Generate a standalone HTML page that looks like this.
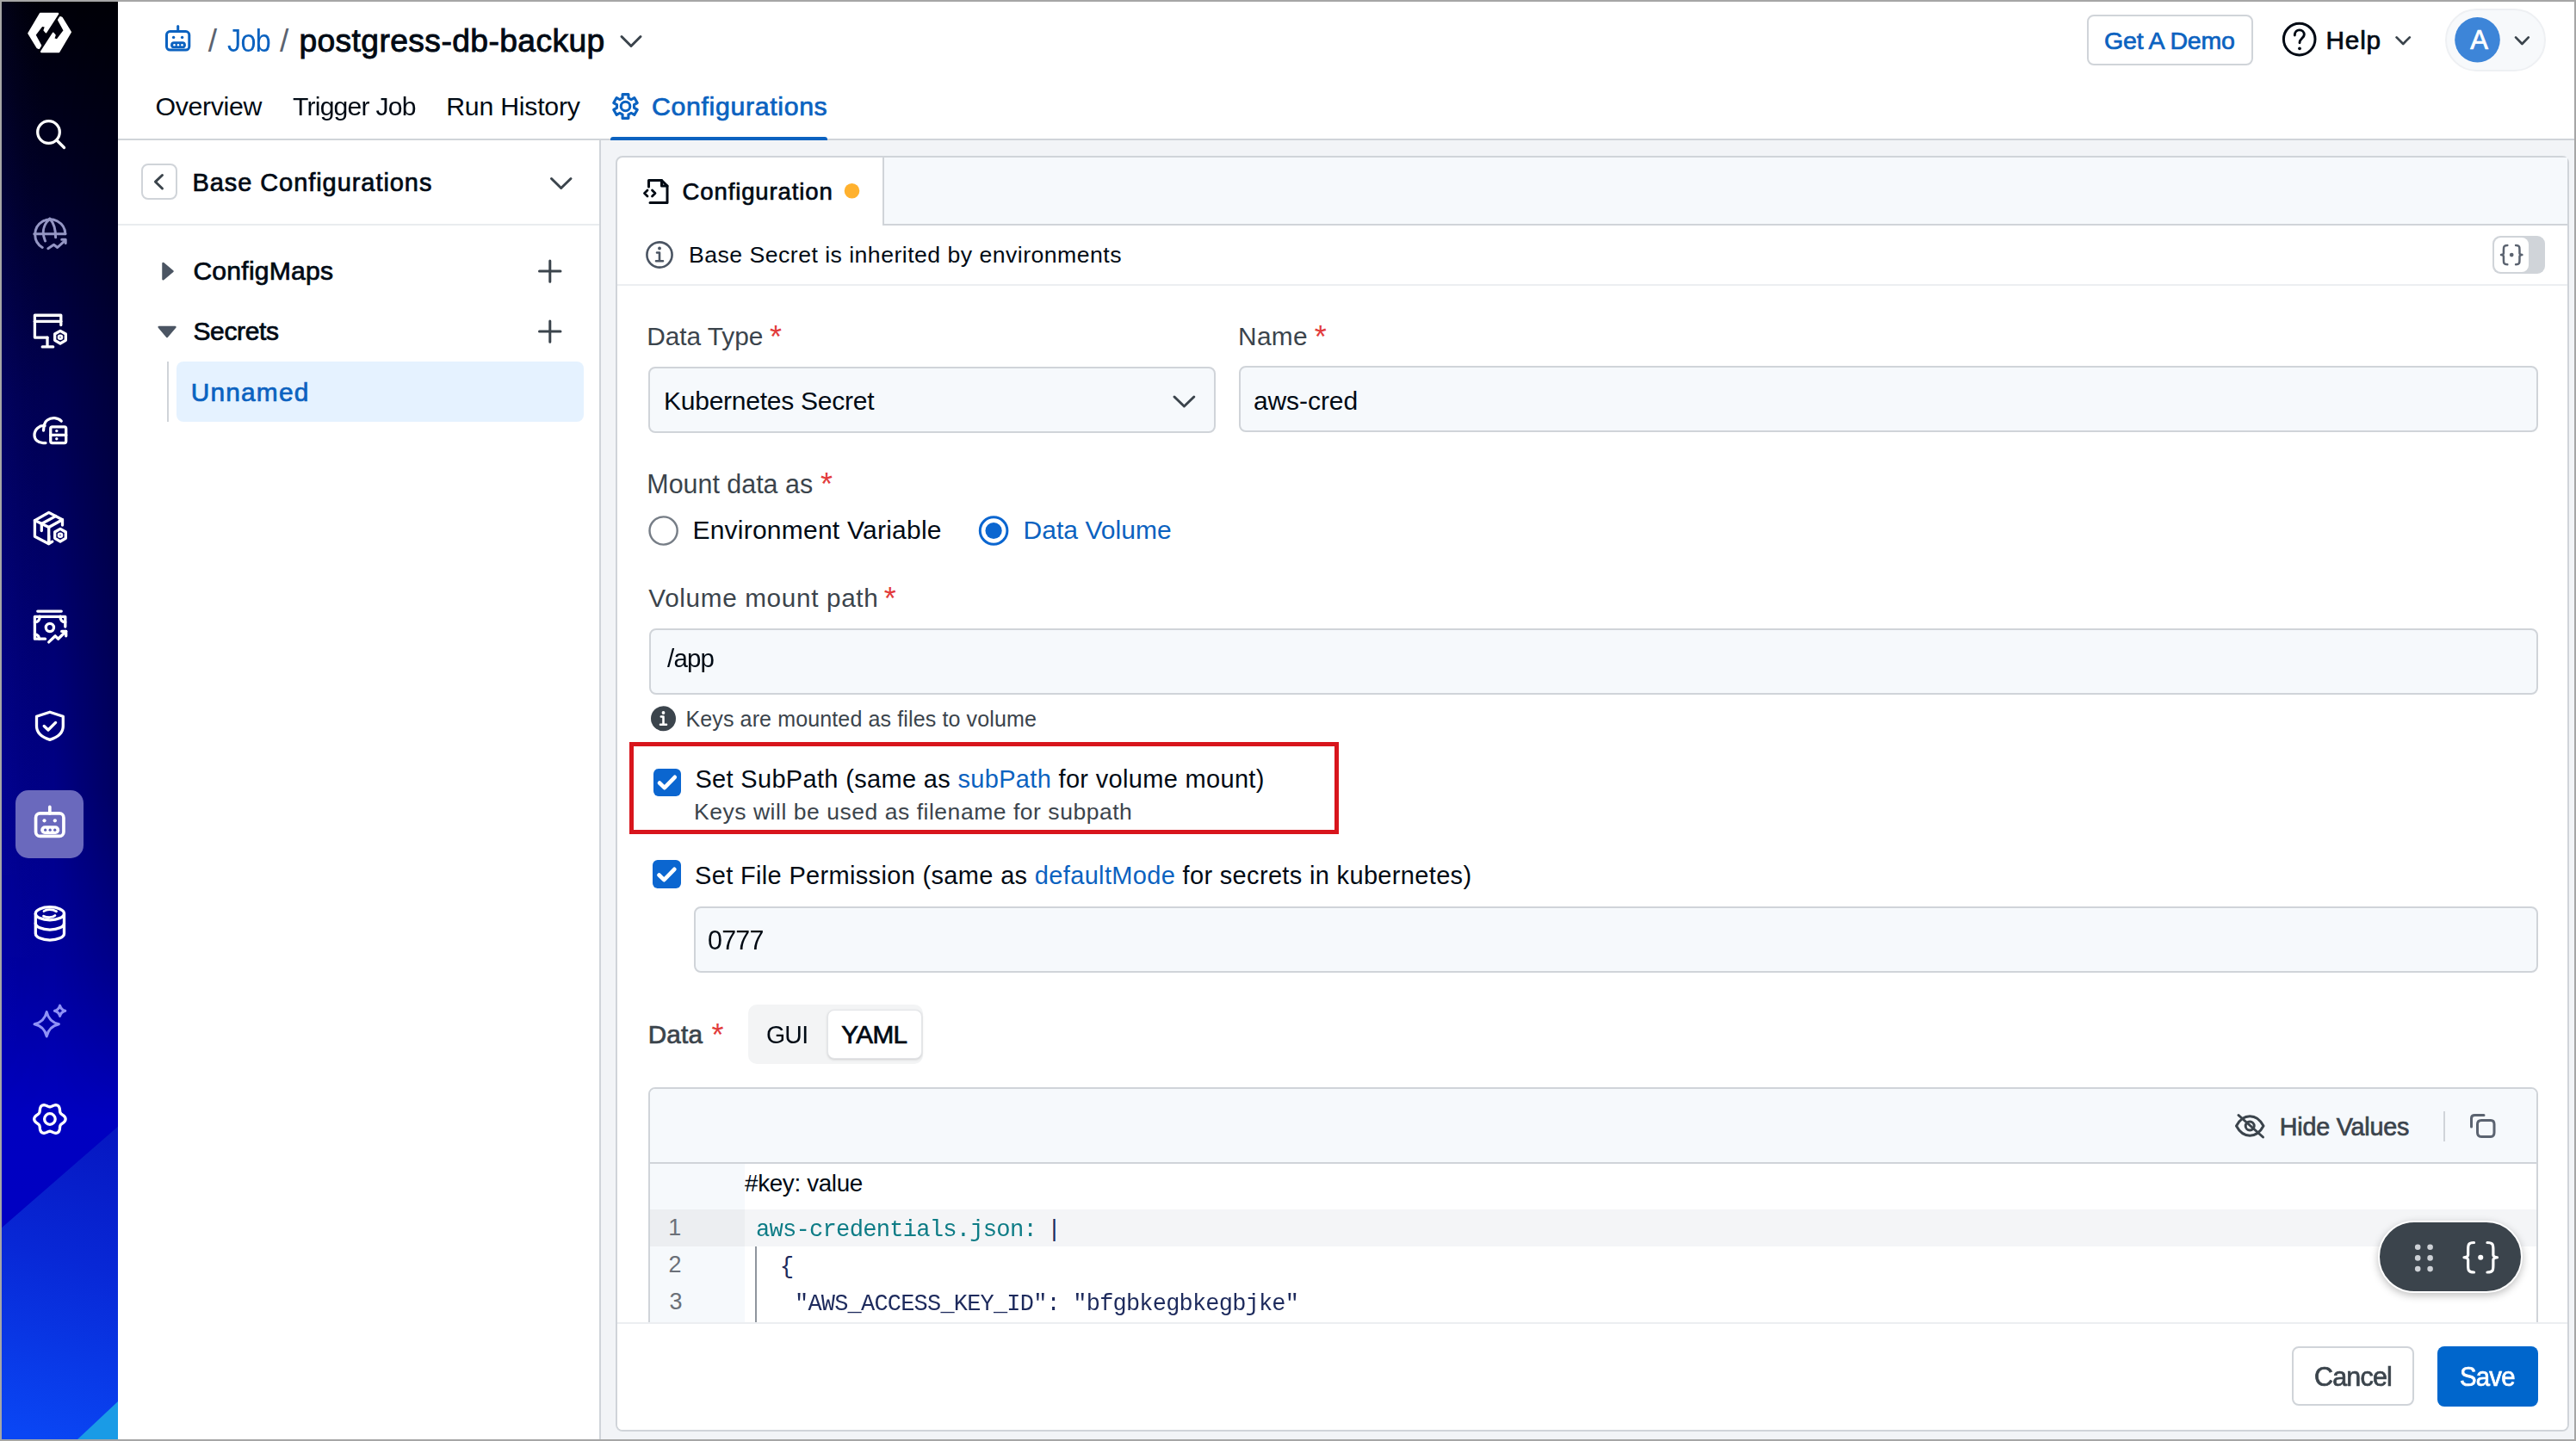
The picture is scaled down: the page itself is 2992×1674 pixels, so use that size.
<!DOCTYPE html>
<html><head><meta charset="utf-8">
<style>
html,body{margin:0;padding:0}
body{width:2992px;height:1674px;overflow:hidden;position:relative;background:#fff;font-family:"Liberation Sans",sans-serif}
.a{position:absolute;box-sizing:border-box}
.t{position:absolute;white-space:nowrap;line-height:1;z-index:6}
svg{position:absolute;overflow:visible}
</style></head><body>
<!-- sidebar -->
<div class="a" style="left:2px;top:2px;width:135px;height:1670px;overflow:hidden;background:#000080">
 <svg width="135" height="1670" style="left:0;top:0">
  <defs>
   <linearGradient id="sv" x1="0" y1="0" x2="0" y2="1">
    <stop offset="0" stop-color="#000008"/><stop offset="0.119" stop-color="#000024"/><stop offset="0.274" stop-color="#000052"/>
    <stop offset="0.472" stop-color="#000078"/><stop offset="0.67" stop-color="#00009e"/><stop offset="0.777" stop-color="#0000c0"/><stop offset="1" stop-color="#0000c8"/>
   </linearGradient>
   <linearGradient id="sh" x1="0" y1="0" x2="1" y2="0">
    <stop offset="0" stop-color="#1e1eff" stop-opacity="0.07"/><stop offset="0.45" stop-color="#000" stop-opacity="0"/><stop offset="1" stop-color="#000" stop-opacity="0.28"/>
   </linearGradient>
   <linearGradient id="sf" x1="0" y1="0" x2="0" y2="1">
    <stop offset="0" stop-color="#fff"/><stop offset="0.55" stop-color="#fff"/><stop offset="0.78" stop-color="#fff" stop-opacity="0"/>
   </linearGradient>
   <mask id="sm"><rect x="0" y="0" width="135" height="1670" fill="url(#sf)"/></mask>
   <linearGradient id="lb" gradientUnits="userSpaceOnUse" x1="137" y1="1303" x2="40" y2="1668">
    <stop offset="0" stop-color="#0616c0"/><stop offset="0.45" stop-color="#0828d6"/><stop offset="1" stop-color="#0a46f4"/>
   </linearGradient>
  </defs>
  <rect x="0" y="0" width="135" height="1670" fill="url(#sv)"/>
  <rect x="0" y="0" width="135" height="1670" fill="url(#sh)" mask="url(#sm)"/>
  <polygon points="-2,1426 137,1305 137,1672 -2,1672" fill="url(#lb)"/>
  <polygon points="86,1672 137,1624 137,1672" fill="#1a9be6"/>
 </svg>
</div>
<!-- header -->
<div class="a" style="left:137px;top:161px;width:2853px;height:2px;background:#d0d4d9"></div>
<!-- left panel -->
<div class="a" style="left:696px;top:163px;width:2px;height:1509px;background:#d0d4d9"></div>
<div class="a" style="left:137px;top:260px;width:559px;height:2px;background:#e9ecef"></div>
<div class="a" style="left:698px;top:163px;width:2292px;height:1509px;background:#f2f4f7"></div>
<!-- card -->
<div class="a" style="left:715px;top:181px;width:2269px;height:1482px;border:2px solid #d0d4d9;border-radius:8px;background:#fff;overflow:hidden">
</div>
<div class="a" style="left:137px;top:161px;width:2853px;height:2px;background:#d0d4d9"></div>
<div class="a" style="left:709px;top:159px;width:252px;height:4px;background:#0b62c0;border-radius:3px 3px 0 0"></div>
<div class="a" style="left:2423.5px;top:16.6px;width:193.5px;height:59.9px;border:2px solid #d0d4d9;border-radius:8px"></div>
<div class="a" style="left:2840.4px;top:9.5px;width:116.6px;height:73.5px;background:#f7f9fb;border:2px solid #eef0f3;border-radius:37px"></div>
<div class="a" style="left:163.6px;top:189.6px;width:42.9px;height:42.9px;border:2px solid #d0d4d9;border-radius:8px"></div>
<div class="a" style="left:193.8px;top:420px;width:2.2px;height:69.8px;background:#d0d4d9"></div>
<div class="a" style="left:205px;top:420px;width:473px;height:69.8px;background:#e5f2ff;border-radius:8px"></div>
<div class="a" style="left:1025px;top:183px;width:2px;height:77px;background:#d0d4d9"></div>
<div class="a" style="left:1027px;top:183px;width:1955px;height:77px;background:#f6f9fc"></div>
<div class="a" style="left:1025px;top:260px;width:1957px;height:2px;background:#d0d4d9"></div>
<div class="a" style="left:717px;top:330px;width:2265px;height:2px;background:#eceef1"></div>
<div class="a" style="left:2895.3px;top:274px;width:60.3px;height:43.5px;background:#d0d4d9;border-radius:9px"></div>
<div class="a" style="left:2897.3px;top:276px;width:40px;height:39.5px;background:#fff;border-radius:8px"></div>
<div class="a" style="left:753.3px;top:425.5px;width:659.1px;height:77.5px;background:#f6f9fc;border:2px solid #d0d4d9;border-radius:8px"></div>
<div class="a" style="left:1439px;top:425.3px;width:1509.2px;height:77.2px;background:#f6f9fc;border:2px solid #d0d4d9;border-radius:8px"></div>
<div class="a" style="left:753.5px;top:730px;width:2194.5px;height:77px;background:#f6f9fc;border:2px solid #d0d4d9;border-radius:8px"></div>
<div class="a" style="left:805.6px;top:1052.7px;width:2142.4px;height:77.5px;background:#f6f9fc;border:2px solid #d0d4d9;border-radius:8px"></div>
<div class="a" style="left:730.5px;top:862.4px;width:824.8px;height:106.4px;border:5px solid #d8151c"></div>
<div class="a" style="left:758.9px;top:892.5px;width:32.4px;height:32.5px;background:#0b66d0;border-radius:6px"></div>
<div class="a" style="left:758.4px;top:999.4px;width:33.1px;height:33.1px;background:#0b66d0;border-radius:6px"></div>
<div class="a" style="left:868.6px;top:1166.5px;width:203.4px;height:69.9px;background:#f3f4f5;border-radius:10px"></div>
<div class="a" style="left:961.4px;top:1173px;width:109.8px;height:57.3px;background:#fff;border:1px solid #e4e6e9;border-radius:8px;box-shadow:0 1px 3px rgba(0,0,0,0.16)"></div>
<div class="a" style="left:753.3px;top:1263.3px;width:2194.7px;height:400px;border:2px solid #d0d4d9;border-radius:8px;background:#fff"></div>
<div class="a" style="left:755.3px;top:1265.3px;width:2190.7px;height:85px;background:#f6f9fc;border-radius:6px 6px 0 0"></div>
<div class="a" style="left:755.3px;top:1350px;width:2190.7px;height:2px;background:#d0d4d9"></div>
<div class="a" style="left:755.3px;top:1352px;width:110px;height:190px;background:#f6f9fc"></div>
<div class="a" style="left:865.3px;top:1405.4px;width:2080.7px;height:42.6px;background:#f4f5f7"></div>
<div class="a" style="left:755.3px;top:1405.4px;width:110px;height:42.6px;background:#eceef1"></div>
<div class="a" style="left:877px;top:1448px;width:2px;height:88px;background:#8f959d"></div>
<div class="a" style="left:2838px;top:1291px;width:2px;height:35px;background:#d0d4d9"></div>
<div class="a" style="left:717px;top:1536px;width:2265px;height:125px;background:#fff;border-top:2px solid #eceef1;border-radius:0 0 6px 6px"></div>
<div class="a" style="left:2661.5px;top:1564.3px;width:142.8px;height:68.9px;border:2px solid #d0d4d9;border-radius:8px;background:#fff"></div>
<div class="a" style="left:2831.3px;top:1564.3px;width:116.6px;height:69.7px;background:#0066cc;border-radius:8px"></div>
<div class="a" style="left:2761.6px;top:1418.3px;width:168.4px;height:84.2px;background:#3b444c;border:2px solid #fff;border-radius:44px;box-shadow:0 3px 10px rgba(0,0,0,0.25)"></div>
<div class="a" style="left:18.2px;top:917.7px;width:78.8px;height:79.3px;background:#6a69bd;border-radius:15px"></div>
<svg width="2992" height="1674" style="left:0;top:0;z-index:5">
<polygon points="46.75,15.97 67.20,15.97 53.47,37.23 51.55,35.02 53.09,30.90 48.96,29.36 40.42,40.59 47.09,52.88 45.22,55.86 43.39,55.18 33.31,38.77" fill="#fff" stroke="#fff" stroke-width="2.2" stroke-linejoin="round"/>
<polygon points="68.45,60.03 48.00,60.03 61.73,38.77 63.65,40.98 62.11,45.10 66.24,46.64 74.78,35.41 68.11,23.12 69.98,20.14 71.81,20.82 81.89,37.23" fill="#fff" stroke="#fff" stroke-width="2.2" stroke-linejoin="round"/>
<circle cx="56.5" cy="153.5" r="12.8" fill="none" stroke="#fff" stroke-width="3.3"/>
<path d="M66,163 L74.5,171.5" fill="none" stroke="#ffffff" stroke-width="3.3" stroke-linecap="round" stroke-linejoin="round" />
<path d="M49.2,287.5 A17.6,17.6 0 1 1 75.9,271.7" fill="none" stroke="#9496c4" stroke-width="3" stroke-linecap="round" stroke-linejoin="round" />
<path d="M39.8,271.7 L75.9,271.7" fill="none" stroke="#9496c4" stroke-width="3" stroke-linecap="round" stroke-linejoin="round" />
<path d="M57.9,254.2 C49,262 49,272 52.5,280" fill="none" stroke="#9496c4" stroke-width="3" stroke-linecap="round" stroke-linejoin="round" />
<path d="M57.9,254.2 C63.5,260 64.6,268 64.6,275.8" fill="none" stroke="#9496c4" stroke-width="3" stroke-linecap="round" stroke-linejoin="round" />
<path d="M55.8,288.75 L62.5,284.2 L66.7,287.5 L75.4,279.6" fill="none" stroke="#9496c4" stroke-width="3" stroke-linecap="round" stroke-linejoin="round" />
<path d="M71.7,278.3 L76.2,278.3 L76.2,282.5" fill="none" stroke="#9496c4" stroke-width="3" stroke-linecap="round" stroke-linejoin="round" />
<path d="M70.8,377.5 L70.8,366.25 L40.4,366.25 L40.4,392.1 L55,392.1" fill="none" stroke="#ffffff" stroke-width="3.3" stroke-linecap="round" stroke-linejoin="round" />
<path d="M40.4,373.3 L70.8,373.3" fill="none" stroke="#ffffff" stroke-width="3.3" stroke-linecap="round" stroke-linejoin="round" />
<path d="M55,392.1 L55,402.9 M49.2,402.9 L61.7,402.9" fill="none" stroke="#ffffff" stroke-width="3.3" stroke-linecap="round" stroke-linejoin="round" />
<path d="M70.00,399.00 L63.68,395.35 L63.68,388.05 L70.00,384.40 L76.32,388.05 L76.32,395.35 Z" fill="none" stroke="#ffffff" stroke-width="3.3" stroke-linecap="round" stroke-linejoin="round" />
<circle cx="70" cy="391.7" r="2" fill="none" stroke="#fff" stroke-width="2.6"/>
<path d="M71.25,489.2 C67,485 60,484.5 55,488 C52,490 50.8,494 50.5,500" fill="none" stroke="#ffffff" stroke-width="3.3" stroke-linecap="round" stroke-linejoin="round" />
<path d="M52,494.5 C46,494 40,498.5 40,505.5 C40,511 44.5,514.6 50,514.6 L53,514.6" fill="none" stroke="#ffffff" stroke-width="3.3" stroke-linecap="round" stroke-linejoin="round" />
<rect x="58.75" y="495.8" width="17.95" height="18.8" rx="2" fill="none" stroke="#fff" stroke-width="3.3"/>
<path d="M58.75,505.4 L76.7,505.4" fill="none" stroke="#ffffff" stroke-width="3.3" stroke-linecap="round" stroke-linejoin="round" />
<circle cx="65.8" cy="500.6" r="1.7" fill="#fff"/><circle cx="65.8" cy="509.8" r="1.7" fill="#fff"/>
<path d="M56.7,622.5 L56.7,631.7 L40.4,623.3 L40.4,604.6 L56.7,595.4 L72.5,603.75 L72.5,610" fill="none" stroke="#ffffff" stroke-width="3.3" stroke-linecap="round" stroke-linejoin="round" />
<path d="M40.4,604.6 L56.7,612.5 L72.5,603.75" fill="none" stroke="#ffffff" stroke-width="3.3" stroke-linecap="round" stroke-linejoin="round" />
<path d="M56.7,612.5 L56.7,631.7 L60.8,629.2" fill="none" stroke="#ffffff" stroke-width="3.3" stroke-linecap="round" stroke-linejoin="round" />
<path d="M48.3,608.5 L64.6,599.6" fill="none" stroke="#ffffff" stroke-width="3.3" stroke-linecap="round" stroke-linejoin="round" />
<path d="M48.3,608.5 L48.3,616.5" fill="none" stroke="#ffffff" stroke-width="3.3" stroke-linecap="round" stroke-linejoin="round" />
<path d="M70.00,629.00 L63.68,625.35 L63.68,618.05 L70.00,614.40 L76.32,618.05 L76.32,625.35 Z" fill="none" stroke="#ffffff" stroke-width="3.3" stroke-linecap="round" stroke-linejoin="round" />
<circle cx="70" cy="621.7" r="2" fill="none" stroke="#fff" stroke-width="2.6"/>
<path d="M43.75,710.1 L71.25,710.1" fill="none" stroke="#ffffff" stroke-width="3.3" stroke-linecap="round" stroke-linejoin="round" />
<path d="M52.5,742.2 L40.4,742.2 L40.4,716.3 L75.8,716.3 L75.8,728" fill="none" stroke="#ffffff" stroke-width="3.3" stroke-linecap="round" stroke-linejoin="round" />
<path d="M40.4,722.6 A5,5 0 0 0 45.8,716.3 M75.8,722.6 A5,5 0 0 1 70.4,716.3 M40.4,737 A5.2,5.2 0 0 1 45.6,742.2" fill="none" stroke="#ffffff" stroke-width="3.3" stroke-linecap="round" stroke-linejoin="round" />
<circle cx="57.9" cy="729" r="4.6" fill="none" stroke="#fff" stroke-width="3.3"/>
<path d="M56.7,745.9 L64.2,738.8 L67.5,742.2 L76.7,733.4" fill="none" stroke="#ffffff" stroke-width="3.3" stroke-linecap="round" stroke-linejoin="round" />
<path d="M71.7,733.4 L76.7,733.4 L76.7,738.8" fill="none" stroke="#ffffff" stroke-width="3.3" stroke-linecap="round" stroke-linejoin="round" />
<path d="M57.9,827.2 L73.3,832.3 L73.3,843.5 C73.3,851.5 66.5,856.6 57.9,859.4 C49.3,856.6 42.5,851.5 42.5,843.5 L42.5,832.3 Z" fill="none" stroke="#ffffff" stroke-width="3.3" stroke-linecap="round" stroke-linejoin="round" />
<path d="M51.2,843.5 L56,848 L64.6,839.4" fill="none" stroke="#ffffff" stroke-width="3.3" stroke-linecap="round" stroke-linejoin="round" />
<rect x="41.548" y="944.9544000000001" width="32.4016" height="26.488" rx="4.928" fill="none" stroke="#fff" stroke-width="3.6959999999999997"/><line x1="57.81039999999999" y1="937.4392" x2="57.81039999999999" y2="944.9544000000001" stroke="#fff" stroke-width="3.6959999999999997" stroke-linecap="round"/><circle cx="51.52719999999999" cy="953.332" r="2.0944" fill="#fff"/><circle cx="63.8472" cy="953.332" r="2.0944" fill="#fff"/><rect x="47.215199999999996" y="959.3688000000001" width="21.9296" height="9.6096" rx="4.8048" fill="#fff"/><circle cx="52.636" cy="964.1736000000001" r="1.6016000000000001" fill="#5d5db5"/><circle cx="58.18000000000001" cy="964.1736000000001" r="1.6016000000000001" fill="#5d5db5"/><circle cx="63.724000000000004" cy="964.1736000000001" r="1.6016000000000001" fill="#5d5db5"/>
<ellipse cx="57.9" cy="1061.25" rx="16.6" ry="7.6" fill="none" stroke="#fff" stroke-width="3.3"/>
<path d="M41.3,1061.25 L41.3,1084.5 A16.6,7.6 0 0 0 74.5,1084.5 L74.5,1061.25" fill="none" stroke="#ffffff" stroke-width="3.3" stroke-linecap="round" stroke-linejoin="round" />
<path d="M41.3,1072.5 A16.6,7.6 0 0 0 74.5,1072.5" fill="none" stroke="#ffffff" stroke-width="3.3" stroke-linecap="round" stroke-linejoin="round" />
<path d="M51,1058.5 C54,1056 61,1056 65.5,1058.8" fill="none" stroke="#ffffff" stroke-width="2.8" stroke-linecap="round" stroke-linejoin="round" />
<path d="M50.5,1064.2 C54,1066 61,1066.5 64,1063.6" fill="none" stroke="#ffffff" stroke-width="2.8" stroke-linecap="round" stroke-linejoin="round" />
<path d="M54.2,1175.55 Q56.756,1187.194 68.4,1189.75 Q56.756,1192.306 54.2,1203.95 Q51.644000000000005,1192.306 40.0,1189.75 Q51.644000000000005,1187.194 54.2,1175.55 Z" fill="none" stroke="#8f92f6" stroke-width="3" stroke-linecap="round" stroke-linejoin="round" />
<path d="M69.6,1168.1 Q70.83999999999999,1173.06 75.8,1174.3 Q70.83999999999999,1175.54 69.6,1180.5 Q68.36,1175.54 63.39999999999999,1174.3 Q68.36,1173.06 69.6,1168.1 Z" fill="none" stroke="#8f92f6" stroke-width="3" stroke-linecap="round" stroke-linejoin="round" />
<path d="M76.10,1300.00 L76.05,1300.63 L75.88,1301.26 L75.62,1301.86 L75.27,1302.44 L74.84,1302.99 L74.35,1303.50 L73.82,1303.97 L73.27,1304.41 L72.72,1304.82 L72.18,1305.20 L71.68,1305.57 L71.22,1305.93 L70.82,1306.30 L70.48,1306.69 L70.20,1307.10 L69.98,1307.55 L69.82,1308.04 L69.70,1308.57 L69.61,1309.15 L69.54,1309.77 L69.48,1310.43 L69.40,1311.11 L69.30,1311.80 L69.15,1312.50 L68.96,1313.18 L68.70,1313.82 L68.37,1314.42 L67.98,1314.95 L67.52,1315.40 L67.00,1315.76 L66.42,1316.03 L65.80,1316.20 L65.15,1316.28 L64.47,1316.26 L63.78,1316.16 L63.10,1315.99 L62.42,1315.77 L61.77,1315.52 L61.14,1315.24 L60.54,1314.97 L59.97,1314.72 L59.42,1314.50 L58.90,1314.34 L58.40,1314.24 L57.90,1314.20 L57.40,1314.24 L56.90,1314.34 L56.38,1314.50 L55.83,1314.72 L55.26,1314.97 L54.66,1315.24 L54.03,1315.52 L53.38,1315.77 L52.70,1315.99 L52.02,1316.16 L51.33,1316.26 L50.65,1316.28 L50.00,1316.20 L49.38,1316.03 L48.80,1315.76 L48.28,1315.40 L47.82,1314.95 L47.43,1314.42 L47.10,1313.82 L46.84,1313.18 L46.65,1312.50 L46.50,1311.80 L46.40,1311.11 L46.32,1310.43 L46.26,1309.77 L46.19,1309.15 L46.10,1308.57 L45.98,1308.04 L45.82,1307.55 L45.60,1307.10 L45.32,1306.69 L44.98,1306.30 L44.58,1305.93 L44.12,1305.57 L43.62,1305.20 L43.08,1304.82 L42.53,1304.41 L41.98,1303.97 L41.45,1303.50 L40.96,1302.99 L40.53,1302.44 L40.18,1301.86 L39.92,1301.26 L39.75,1300.63 L39.70,1300.00 L39.75,1299.37 L39.92,1298.74 L40.18,1298.14 L40.53,1297.56 L40.96,1297.01 L41.45,1296.50 L41.98,1296.03 L42.53,1295.59 L43.08,1295.18 L43.62,1294.80 L44.12,1294.43 L44.58,1294.07 L44.98,1293.70 L45.32,1293.31 L45.60,1292.90 L45.82,1292.45 L45.98,1291.96 L46.10,1291.43 L46.19,1290.85 L46.26,1290.23 L46.32,1289.57 L46.40,1288.89 L46.50,1288.20 L46.65,1287.50 L46.84,1286.82 L47.10,1286.18 L47.43,1285.58 L47.82,1285.05 L48.28,1284.60 L48.80,1284.24 L49.38,1283.97 L50.00,1283.80 L50.65,1283.72 L51.33,1283.74 L52.02,1283.84 L52.70,1284.01 L53.38,1284.23 L54.03,1284.48 L54.66,1284.76 L55.26,1285.03 L55.83,1285.28 L56.38,1285.50 L56.90,1285.66 L57.40,1285.76 L57.90,1285.80 L58.40,1285.76 L58.90,1285.66 L59.42,1285.50 L59.97,1285.28 L60.54,1285.03 L61.14,1284.76 L61.77,1284.48 L62.42,1284.23 L63.10,1284.01 L63.78,1283.84 L64.47,1283.74 L65.15,1283.72 L65.80,1283.80 L66.42,1283.97 L67.00,1284.24 L67.52,1284.60 L67.98,1285.05 L68.37,1285.58 L68.70,1286.18 L68.96,1286.82 L69.15,1287.50 L69.30,1288.20 L69.40,1288.89 L69.48,1289.57 L69.54,1290.23 L69.61,1290.85 L69.70,1291.43 L69.82,1291.96 L69.98,1292.45 L70.20,1292.90 L70.48,1293.31 L70.82,1293.70 L71.22,1294.07 L71.68,1294.43 L72.18,1294.80 L72.72,1295.18 L73.27,1295.59 L73.82,1296.03 L74.35,1296.50 L74.84,1297.01 L75.27,1297.56 L75.62,1298.14 L75.88,1298.74 L76.05,1299.37 Z" fill="none" stroke="#ffffff" stroke-width="3.3" stroke-linecap="round" stroke-linejoin="round" />
<circle cx="57.9" cy="1300" r="6.3" fill="none" stroke="#fff" stroke-width="3.3"/>
<rect x="193.5" y="36.6" width="26.3" height="21.5" rx="4.0" fill="none" stroke="#0b62c0" stroke-width="3.0"/><line x1="206.7" y1="30.5" x2="206.7" y2="36.6" stroke="#0b62c0" stroke-width="3.0" stroke-linecap="round"/><circle cx="201.6" cy="43.4" r="1.7" fill="#0b62c0"/><circle cx="211.6" cy="43.4" r="1.7" fill="#0b62c0"/><rect x="198.1" y="48.3" width="17.8" height="7.8" rx="3.9" fill="#0b62c0"/><circle cx="202.5" cy="52.2" r="1.3" fill="#fff"/><circle cx="207.0" cy="52.2" r="1.3" fill="#fff"/><circle cx="211.5" cy="52.2" r="1.3" fill="#fff"/>
<path d="M722,42.5 L733,53.5 L744,42.5" fill="none" stroke="#3b444c" stroke-width="3" stroke-linecap="round" stroke-linejoin="round" />
<path d="M723.09,113.89 L723.05,109.62 L729.95,109.62 L729.91,113.89 L733.12,115.74 L736.80,113.58 L740.24,119.55 L736.53,121.65 L736.53,125.35 L740.24,127.45 L736.80,133.42 L733.12,131.26 L729.91,133.11 L729.95,137.38 L723.05,137.38 L723.09,133.11 L719.88,131.26 L716.20,133.42 L712.76,127.45 L716.47,125.35 L716.47,121.65 L712.76,119.55 L716.20,113.58 L719.88,115.74 Z" fill="none" stroke="#0b62c0" stroke-width="3.1" stroke-linecap="round" stroke-linejoin="round" />
<circle cx="726.5" cy="123.5" r="5.3" fill="none" stroke="#0b62c0" stroke-width="3.1"/>
<circle cx="2670.7" cy="45.6" r="18.3" fill="none" stroke="#000a14" stroke-width="3"/>
<path d="M2665.3,41 C2665.3,37 2667.8,34.9 2670.8,34.9 C2674,34.9 2676.3,37.2 2676.3,40.2 C2676.3,44 2671,44.8 2671,49.8" fill="none" stroke="#000a14" stroke-width="2.9" stroke-linecap="round" stroke-linejoin="round" />
<circle cx="2671" cy="56.3" r="1.9" fill="#000a14"/>
<path d="M2783.6,43.4 L2791.2,51 L2798.8,43.4" fill="none" stroke="#3b444c" stroke-width="2.7" stroke-linecap="round" stroke-linejoin="round" />
<circle cx="2877.5" cy="46.25" r="26.3" fill="#3d85d8"/>
<path d="M2922,43.4 L2929.4,51 L2936.8,43.4" fill="none" stroke="#3b444c" stroke-width="2.7" stroke-linecap="round" stroke-linejoin="round" />
<path d="M188.5,203.5 L180.5,211.2 L188.5,219" fill="none" stroke="#3b444c" stroke-width="3" stroke-linecap="round" stroke-linejoin="round" />
<path d="M640.5,207.5 L651.7,218.5 L663,207.5" fill="none" stroke="#3b444c" stroke-width="3" stroke-linecap="round" stroke-linejoin="round" />
<polygon points="189.5,306 200.5,315.1 189.5,324.3" fill="#4b5563" stroke="#4b5563" stroke-width="2.5" stroke-linejoin="round"/>
<polygon points="184.7,380 203.4,380 194,391" fill="#4b5563" stroke="#4b5563" stroke-width="2.5" stroke-linejoin="round"/>
<path d="M626.5,315.1 L651,315.1 M638.8,303 L638.8,327.2" fill="none" stroke="#3b444c" stroke-width="3" stroke-linecap="round" stroke-linejoin="round" />
<path d="M626.5,385.1 L651,385.1 M638.8,373 L638.8,397.2" fill="none" stroke="#3b444c" stroke-width="3" stroke-linecap="round" stroke-linejoin="round" />
<path d="M753.5,217 L753.5,209.5 L768.5,209.5 L775,216 L775,235.5 L755,235.5" fill="none" stroke="#000a14" stroke-width="3" stroke-linecap="round" stroke-linejoin="round" />
<path d="M768.5,209.5 L768.5,216 L775,216" fill="none" stroke="#000a14" stroke-width="3" stroke-linecap="round" stroke-linejoin="round" />
<path d="M752,221 L748.5,224.5 L752,228 M757.5,221 L761,224.5 L757.5,228" fill="none" stroke="#000a14" stroke-width="2.8" stroke-linecap="round" stroke-linejoin="round" />
<circle cx="989.5" cy="221.8" r="8.8" fill="#ffb12e"/>
<circle cx="766" cy="296" r="14.6" fill="none" stroke="#4b5563" stroke-width="2.6"/>
<circle cx="766" cy="288.5" r="1.9" fill="#4b5563"/>
<path d="M763,293.5 L766,293.5 L766,303 M762,303.3 L770,303.3" fill="none" stroke="#4b5563" stroke-width="2.6" stroke-linecap="round" stroke-linejoin="round" />
<path d="M2912.32,285 C2907.928,285 2907.928,286.776 2907.928,290.55 L2907.928,294.324 C2907.928,295.656 2905,296.1 2905,296.1 C2905,296.1 2907.928,296.54400000000004 2907.928,297.87600000000003 L2907.928,301.65 C2907.928,305.424 2907.928,307.2 2912.32,307.2" fill="none" stroke="#5b6370" stroke-width="2.5" stroke-linecap="round" stroke-linejoin="round"/><path d="M2922.08,285 C2926.472,285 2926.472,286.776 2926.472,290.55 L2926.472,294.324 C2926.472,295.656 2929.4,296.1 2929.4,296.1 C2929.4,296.1 2926.472,296.54400000000004 2926.472,297.87600000000003 L2926.472,301.65 C2926.472,305.424 2926.472,307.2 2922.08,307.2" fill="none" stroke="#5b6370" stroke-width="2.5" stroke-linecap="round" stroke-linejoin="round"/><circle cx="2917.2" cy="296.1" r="2.375" fill="#5b6370"/>
<path d="M1364,461 L1375.4,472 L1386.8,461" fill="none" stroke="#3b444c" stroke-width="3" stroke-linecap="round" stroke-linejoin="round" />
<circle cx="770.6" cy="616.5" r="16.1" fill="#fff" stroke="#767d86" stroke-width="2.4"/>
<circle cx="1154.1" cy="616.5" r="15.8" fill="#fff" stroke="#0b66d0" stroke-width="3"/>
<circle cx="1154.1" cy="616.5" r="9.6" fill="#0b66d0"/>
<circle cx="770.5" cy="834.8" r="14.5" fill="#3b444c"/>
<circle cx="770.5" cy="828" r="1.9" fill="#fff"/>
<path d="M767.8,832.5 L770.5,832.5 L770.5,841.5 M767,841.8 L774,841.8" fill="none" stroke="#fff" stroke-width="2.6" stroke-linecap="round" stroke-linejoin="round" />
<path d="M766,909.5 L771.8,915.2 L783.8,902.8" fill="none" stroke="#fff" stroke-width="4.6" stroke-linecap="round" stroke-linejoin="round" />
<path d="M765.5,1016.5 L771.3,1022.2 L783.3,1009.8" fill="none" stroke="#fff" stroke-width="4.6" stroke-linecap="round" stroke-linejoin="round" />
<path d="M2597.5,1308 C2601.5,1300.5 2607.5,1296.8 2613.2,1296.8 C2619,1296.8 2625,1300.5 2629,1308 C2625,1315.5 2619,1319.2 2613.2,1319.2 C2607.5,1319.2 2601.5,1315.5 2597.5,1308 Z" fill="none" stroke="#3b444c" stroke-width="3" stroke-linecap="round" stroke-linejoin="round" />
<circle cx="2613.2" cy="1308" r="5" fill="none" stroke="#3b444c" stroke-width="3"/>
<path d="M2600,1295.5 L2628.5,1321" fill="none" stroke="#3b444c" stroke-width="3" stroke-linecap="round" stroke-linejoin="round" />
<path d="M2877.5,1306 L2877.5,1315.5 C2877.5,1318.5 2879,1320.5 2882,1320.5 L2893,1320.5 C2896,1320.5 2897,1318.5 2897,1315.5 L2897,1306 C2897,1303 2896,1301.5 2893,1301.5 L2882,1301.5 C2879,1301.5 2877.5,1303 2877.5,1306 Z" fill="none" stroke="#5b6370" stroke-width="3" stroke-linecap="round" stroke-linejoin="round" />
<path d="M2870.5,1309 L2870.5,1299 C2870.5,1296.5 2872,1295.5 2874.5,1295.5 L2885,1295.5" fill="none" stroke="#5b6370" stroke-width="3" stroke-linecap="round" stroke-linejoin="round" />
<circle cx="2808.2" cy="1448.7" r="3.3" fill="#cdd1d6"/>
<circle cx="2808.2" cy="1461.4" r="3.3" fill="#cdd1d6"/>
<circle cx="2808.2" cy="1474.1" r="3.3" fill="#cdd1d6"/>
<circle cx="2822.6" cy="1448.7" r="3.3" fill="#cdd1d6"/>
<circle cx="2822.6" cy="1461.4" r="3.3" fill="#cdd1d6"/>
<circle cx="2822.6" cy="1474.1" r="3.3" fill="#cdd1d6"/>
<path d="M2873.55,1443.5 C2866.62,1443.5 2866.62,1446.26 2866.62,1452.125 L2866.62,1457.99 C2866.62,1460.06 2862,1460.75 2862,1460.75 C2862,1460.75 2866.62,1461.44 2866.62,1463.51 L2866.62,1469.375 C2866.62,1475.24 2866.62,1478.0 2873.55,1478.0" fill="none" stroke="#fff" stroke-width="3.2" stroke-linecap="round" stroke-linejoin="round"/><path d="M2888.95,1443.5 C2895.88,1443.5 2895.88,1446.26 2895.88,1452.125 L2895.88,1457.99 C2895.88,1460.06 2900.5,1460.75 2900.5,1460.75 C2900.5,1460.75 2895.88,1461.44 2895.88,1463.51 L2895.88,1469.375 C2895.88,1475.24 2895.88,1478.0 2888.95,1478.0" fill="none" stroke="#fff" stroke-width="3.2" stroke-linecap="round" stroke-linejoin="round"/><circle cx="2881.25" cy="1460.75" r="3.04" fill="#fff"/>
</svg>
<div class="t" style="left:241.70px;top:28.54px;font-size:37.25px;letter-spacing:0.000px;color:#5b6370;font-weight:400;font-family:'Liberation Sans'">/</div>
<div class="t" style="left:263.80px;top:28.54px;font-size:37.25px;letter-spacing:-0.800px;color:#0b62c0;font-weight:400;font-family:'Liberation Sans';transform:scaleX(0.8669);transform-origin:0 0">Job</div>
<div class="t" style="left:325.00px;top:28.54px;font-size:37.25px;letter-spacing:0.000px;color:#5b6370;font-weight:400;font-family:'Liberation Sans'">/</div>
<div class="t" style="left:347.40px;top:28.54px;font-size:37.25px;letter-spacing:0.389px;color:#000a14;font-weight:400;font-family:'Liberation Sans';-webkit-text-stroke:0.89px #000a14">postgress-db-backup</div>
<div class="t" style="left:180.60px;top:108.55px;font-size:30.29px;letter-spacing:-0.357px;color:#000a14;font-weight:400;font-family:'Liberation Sans'">Overview</div>
<div class="t" style="left:340.00px;top:108.55px;font-size:30.29px;letter-spacing:-0.800px;color:#000a14;font-weight:400;font-family:'Liberation Sans';transform:scaleX(0.9958);transform-origin:0 0">Trigger Job</div>
<div class="t" style="left:518.20px;top:108.55px;font-size:30.29px;letter-spacing:-0.250px;color:#000a14;font-weight:400;font-family:'Liberation Sans'">Run History</div>
<div class="t" style="left:757.00px;top:108.55px;font-size:30.29px;letter-spacing:0.654px;color:#0b62c0;font-weight:400;font-family:'Liberation Sans';-webkit-text-stroke:0.73px #0b62c0">Configurations</div>
<div class="t" style="left:2444.00px;top:32.73px;font-size:28.55px;letter-spacing:-0.222px;color:#0b62c0;font-weight:400;font-family:'Liberation Sans';-webkit-text-stroke:0.69px #0b62c0">Get A Demo</div>
<div class="t" style="left:2701.50px;top:31.85px;font-size:29.71px;letter-spacing:0.833px;color:#000a14;font-weight:400;font-family:'Liberation Sans';-webkit-text-stroke:0.71px #000a14">Help</div>
<div class="t" style="left:2869.20px;top:31.14px;font-size:31.01px;letter-spacing:0.000px;color:#ffffff;font-weight:400;font-family:'Liberation Sans';-webkit-text-stroke:0.74px #ffffff">A</div>
<div class="t" style="left:223.40px;top:197.76px;font-size:28.99px;letter-spacing:0.944px;color:#000a14;font-weight:400;font-family:'Liberation Sans';-webkit-text-stroke:0.70px #000a14">Base Configurations</div>
<div class="t" style="left:224.40px;top:300.18px;font-size:30.14px;letter-spacing:0.222px;color:#000a14;font-weight:400;font-family:'Liberation Sans';-webkit-text-stroke:0.72px #000a14">ConfigMaps</div>
<div class="t" style="left:224.40px;top:369.70px;font-size:30.0px;letter-spacing:-0.333px;color:#000a14;font-weight:400;font-family:'Liberation Sans';-webkit-text-stroke:0.72px #000a14">Secrets</div>
<div class="t" style="left:221.80px;top:440.62px;font-size:29.86px;letter-spacing:1.167px;color:#0b62c0;font-weight:400;font-family:'Liberation Sans';-webkit-text-stroke:0.72px #0b62c0">Unnamed</div>
<div class="t" style="left:792.50px;top:208.89px;font-size:27.54px;letter-spacing:0.875px;color:#000a14;font-weight:400;font-family:'Liberation Sans';-webkit-text-stroke:0.66px #000a14">Configuration</div>
<div class="t" style="left:800.00px;top:283.33px;font-size:26.67px;letter-spacing:0.462px;color:#000a14;font-weight:400;font-family:'Liberation Sans'">Base Secret is inherited by environments</div>
<div class="t" style="left:751.30px;top:375.62px;font-size:29.86px;letter-spacing:-0.062px;color:#3b444c;font-weight:400;font-family:'Liberation Sans'">Data Type</div>
<div class="t" style="left:1438.00px;top:375.62px;font-size:29.86px;letter-spacing:0.333px;color:#3b444c;font-weight:400;font-family:'Liberation Sans'">Name</div>
<div class="t" style="left:771.00px;top:450.70px;font-size:30.0px;letter-spacing:-0.250px;color:#000a14;font-weight:400;font-family:'Liberation Sans'">Kubernetes Secret</div>
<div class="t" style="left:1455.90px;top:450.70px;font-size:30.0px;letter-spacing:-0.071px;color:#000a14;font-weight:400;font-family:'Liberation Sans'">aws-cred</div>
<div class="t" style="left:751.30px;top:546.83px;font-size:30.43px;letter-spacing:0.000px;color:#3b444c;font-weight:400;font-family:'Liberation Sans'">Mount data as</div>
<div class="t" style="left:804.40px;top:601.20px;font-size:30.0px;letter-spacing:0.237px;color:#000a14;font-weight:400;font-family:'Liberation Sans'">Environment Variable</div>
<div class="t" style="left:1188.50px;top:601.20px;font-size:30.0px;letter-spacing:0.050px;color:#0b62c0;font-weight:400;font-family:'Liberation Sans'">Data Volume</div>
<div class="t" style="left:753.30px;top:680.25px;font-size:29.71px;letter-spacing:0.656px;color:#3b444c;font-weight:400;font-family:'Liberation Sans'">Volume mount path</div>
<div class="t" style="left:774.70px;top:750.45px;font-size:29.71px;letter-spacing:-0.800px;color:#000a14;font-weight:400;font-family:'Liberation Sans';transform:scaleX(0.9930);transform-origin:0 0">/app</div>
<div class="t" style="left:796.40px;top:822.89px;font-size:25.07px;letter-spacing:0.103px;color:#3b444c;font-weight:400;font-family:'Liberation Sans'">Keys are mounted as files to volume</div>
<div class="t" style="left:807.40px;top:891.46px;font-size:28.99px;letter-spacing:0.333px;color:#000a14;font-weight:400;font-family:'Liberation Sans'">Set SubPath (same as <span style="color:#0b62c0">subPath</span> for volume mount)</div>
<div class="t" style="left:806.00px;top:930.06px;font-size:26.52px;letter-spacing:0.525px;color:#3b444c;font-weight:400;font-family:'Liberation Sans'">Keys will be used as filename for subpath</div>
<div class="t" style="left:807.00px;top:1003.06px;font-size:28.99px;letter-spacing:0.341px;color:#000a14;font-weight:400;font-family:'Liberation Sans'">Set File Permission (same as <span style="color:#0b62c0">defaultMode</span> for secrets in kubernetes)</div>
<div class="t" style="left:822.00px;top:1077.24px;font-size:31.01px;letter-spacing:-0.800px;color:#000a14;font-weight:400;font-family:'Liberation Sans';transform:scaleX(0.9814);transform-origin:0 0">0777</div>
<div class="t" style="left:752.70px;top:1186.95px;font-size:29.71px;letter-spacing:0.167px;color:#3b444c;font-weight:400;font-family:'Liberation Sans';-webkit-text-stroke:0.71px #3b444c">Data</div>
<div class="t" style="left:890.00px;top:1186.95px;font-size:29.71px;letter-spacing:-0.800px;color:#000a14;font-weight:400;font-family:'Liberation Sans';transform:scaleX(0.9583);transform-origin:0 0">GUI</div>
<div class="t" style="left:977.30px;top:1186.95px;font-size:29.71px;letter-spacing:-0.667px;color:#000a14;font-weight:400;font-family:'Liberation Sans';-webkit-text-stroke:0.71px #000a14">YAML</div>
<div class="t" style="left:2647.80px;top:1295.31px;font-size:28.7px;letter-spacing:-0.200px;color:#3b444c;font-weight:400;font-family:'Liberation Sans';-webkit-text-stroke:0.69px #3b444c">Hide Values</div>
<div class="t" style="left:865.00px;top:1361.24px;font-size:27.83px;letter-spacing:-0.350px;color:#000a14;font-weight:400;font-family:'Liberation Sans'">#key: value</div>
<div class="t" style="left:776.20px;top:1413.18px;font-size:26.96px;letter-spacing:0.000px;color:#6b7078;font-weight:400;font-family:'Liberation Sans'">1</div>
<div class="t" style="left:776.60px;top:1456.18px;font-size:26.96px;letter-spacing:0.000px;color:#6b7078;font-weight:400;font-family:'Liberation Sans'">2</div>
<div class="t" style="left:777.40px;top:1499.28px;font-size:26.96px;letter-spacing:0.000px;color:#6b7078;font-weight:400;font-family:'Liberation Sans'">3</div>
<div class="t" style="left:877.50px;top:1415.08px;font-size:27.4px;letter-spacing:-0.800px;color:#0e7c86;font-weight:400;font-family:'Liberation Mono';transform:scaleX(0.9925);transform-origin:0 0">aws-credentials.json:</div>
<div class="t" style="left:1216.30px;top:1415.08px;font-size:27.4px;letter-spacing:0.000px;color:#1d2a5c;font-weight:400;font-family:'Liberation Mono'">|</div>
<div class="t" style="left:905.70px;top:1458.08px;font-size:27.4px;letter-spacing:0.000px;color:#1d2a5c;font-weight:400;font-family:'Liberation Mono'">{</div>
<div class="t" style="left:923.20px;top:1500.78px;font-size:27.4px;letter-spacing:-0.800px;color:#1d2a5c;font-weight:400;font-family:'Liberation Mono';transform:scaleX(0.9847);transform-origin:0 0">"AWS_ACCESS_KEY_ID": "bfgbkegbkegbjke"</div>
<div class="t" style="left:2687.50px;top:1584.14px;font-size:31.01px;letter-spacing:-0.800px;color:#3b444c;font-weight:400;font-family:'Liberation Sans';-webkit-text-stroke:0.74px #3b444c;transform:scaleX(0.9823);transform-origin:0 0">Cancel</div>
<div class="t" style="left:2856.70px;top:1584.14px;font-size:31.01px;letter-spacing:-0.800px;color:#ffffff;font-weight:400;font-family:'Liberation Sans';-webkit-text-stroke:0.74px #ffffff;transform:scaleX(0.9463);transform-origin:0 0">Save</div>
<div class="t" style="left:894.00px;top:373.74px;font-size:36px;letter-spacing:0.000px;color:#e23b3b;font-weight:400;font-family:'Liberation Sans'">*</div>
<div class="t" style="left:1526.70px;top:373.74px;font-size:36px;letter-spacing:0.000px;color:#e23b3b;font-weight:400;font-family:'Liberation Sans'">*</div>
<div class="t" style="left:953.00px;top:544.74px;font-size:36px;letter-spacing:0.000px;color:#e23b3b;font-weight:400;font-family:'Liberation Sans'">*</div>
<div class="t" style="left:1026.80px;top:678.44px;font-size:36px;letter-spacing:0.000px;color:#e23b3b;font-weight:400;font-family:'Liberation Sans'">*</div>
<div class="t" style="left:826.40px;top:1185.24px;font-size:36px;letter-spacing:0.000px;color:#e23b3b;font-weight:400;font-family:'Liberation Sans'">*</div>
<!-- outer frame -->
<div class="a" style="left:0;top:0;width:2992px;height:1674px;border:2px solid #a6a6a6;z-index:50"></div>
</body></html>
